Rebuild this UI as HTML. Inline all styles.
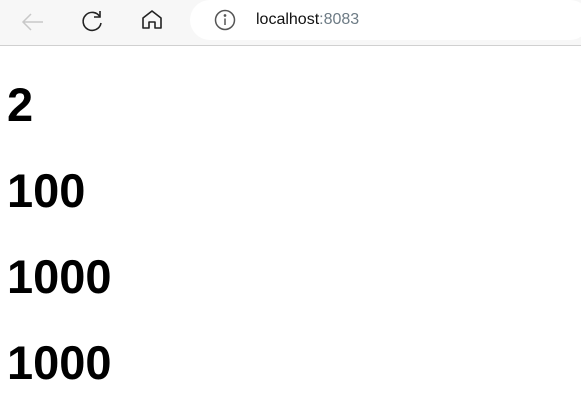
<!DOCTYPE html>
<html><head><style>
body{margin:0;width:581px;height:410px;overflow:hidden;background:#fff;font-family:"Liberation Sans",sans-serif;position:relative}
.bar{position:absolute;left:0;top:0;width:581px;height:45px;background:#f7f7f7;border-bottom:1px solid #d0d0d0}
.addr{position:absolute;left:190px;top:0;width:400px;height:40px;background:#fff;border-radius:20px}
.url{position:absolute;left:256px;top:11px;font-size:16px;color:#111}
.url span{color:#6d7b85}
h{position:absolute;left:7px;font-weight:bold;font-size:47px;line-height:1;color:#000}
</style></head><body>
<div class="bar">
<svg style="position:absolute;left:20px;top:9px" width="26" height="26" viewBox="0 0 26 26" fill="none" stroke="#c8c8c8" stroke-width="1.5"><path d="M23 13H3M11 5L3 13L11 21"/></svg>
<svg style="position:absolute;left:80px;top:8px" width="26" height="26" viewBox="0 0 26 26" fill="none" stroke="#222" stroke-width="1.6"><path d="M20 9A9 9 0 1 0 21 15"/><path d="M20 3V9H14"/></svg>
<svg style="position:absolute;left:140px;top:8px" width="24" height="24" viewBox="0 0 24 24" fill="none" stroke="#222" stroke-width="1.6" stroke-linejoin="round"><path d="M3 10L12 3L21 10V20H15V14H9V20H3Z"/></svg>
<div class="addr"></div>
<svg style="position:absolute;left:214px;top:9px" width="22" height="22" viewBox="0 0 22 22" fill="none" stroke="#555" stroke-width="1.5"><circle cx="11" cy="11" r="9.5"/><path d="M11 9.5V16"/><circle cx="11" cy="6.5" r="0.6" fill="#555"/></svg>
<div class="url">localhost<span>:8083</span></div>
</div>
<h style="top:81px">2</h>
<h style="top:167px">100</h>
<h style="top:253px">1000</h>
<h style="top:339px">1000</h>
</body></html>
